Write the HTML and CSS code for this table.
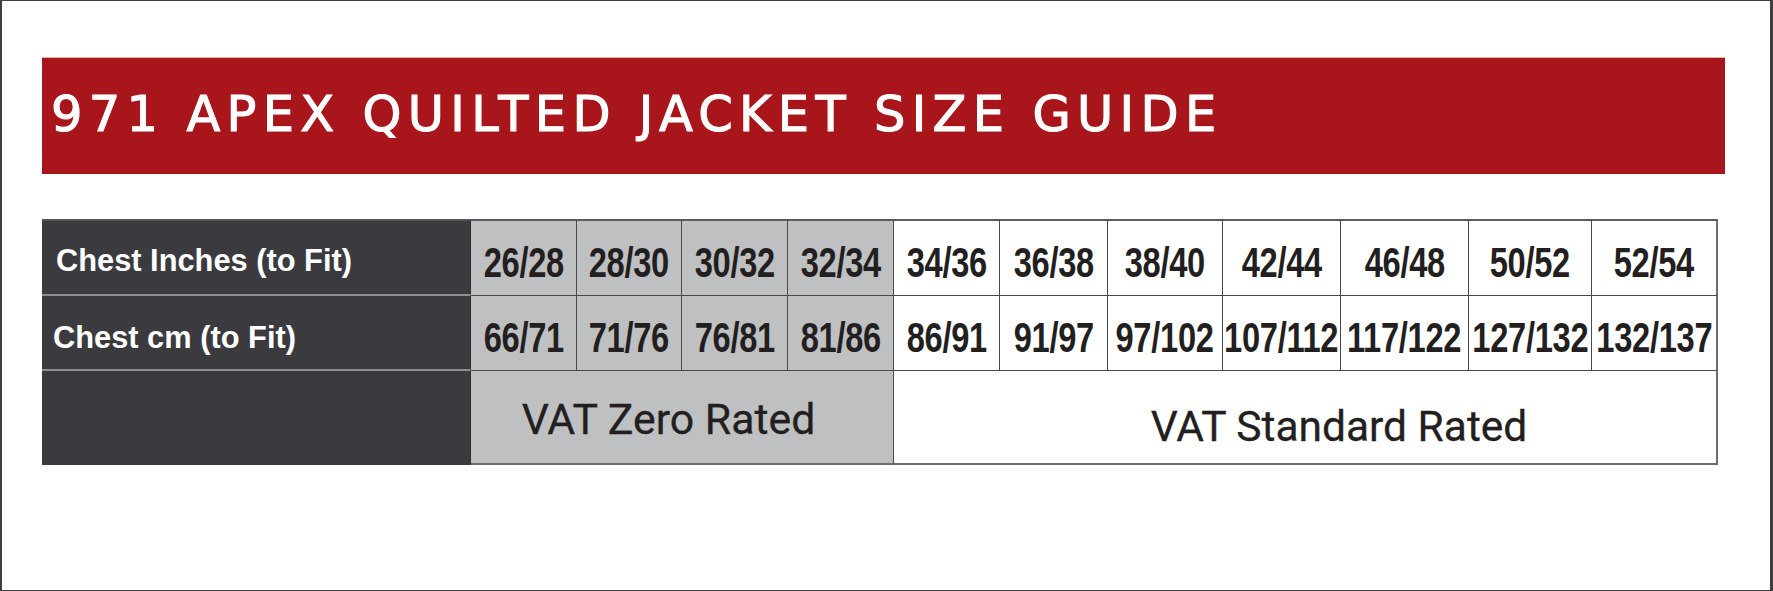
FILE: index.html
```html
<!DOCTYPE html>
<html lang="en">
<head>
<meta charset="utf-8">
<title>971 Apex Quilted Jacket Size Guide</title>
<link rel="stylesheet" href="styles.css">
</head>
<body>
<div class="frame">
  <div class="banner"><h1 class="title">971 APEX QUILTED JACKET SIZE GUIDE</h1></div>
  <div class="table">
    <div class="cell label r1">Chest Inches (to Fit)</div>
    <div class="cell num grey r1"><span>26/28</span></div>
    <div class="cell num grey r1"><span>28/30</span></div>
    <div class="cell num grey r1"><span>30/32</span></div>
    <div class="cell num grey r1"><span>32/34</span></div>
    <div class="cell num r1"><span>34/36</span></div>
    <div class="cell num r1"><span>36/38</span></div>
    <div class="cell num r1"><span>38/40</span></div>
    <div class="cell num r1"><span>42/44</span></div>
    <div class="cell num r1"><span>46/48</span></div>
    <div class="cell num r1"><span>50/52</span></div>
    <div class="cell num r1 last"><span>52/54</span></div>

    <div class="cell label r2">Chest cm (to Fit)</div>
    <div class="cell num grey"><span>66/71</span></div>
    <div class="cell num grey"><span>71/76</span></div>
    <div class="cell num grey"><span>76/81</span></div>
    <div class="cell num grey"><span>81/86</span></div>
    <div class="cell num"><span>86/91</span></div>
    <div class="cell num"><span>91/97</span></div>
    <div class="cell num"><span>97/102</span></div>
    <div class="cell num"><span>107/112</span></div>
    <div class="cell num"><span>117/122</span></div>
    <div class="cell num"><span>127/132</span></div>
    <div class="cell num last"><span>132/137</span></div>

    <div class="cell label r3"></div>
    <div class="cell vat grey zero">VAT Zero Rated</div>
    <div class="cell vat standard last">VAT Standard Rated</div>
  </div>
</div>
</body>
</html>
```
FILE: styles.css
```css
html, body {
  margin: 0;
  padding: 0;
  background: #ffffff;
}

.frame {
  box-sizing: border-box;
  width: 1773px;
  height: 591px;
  border-style: solid;
  border-color: #3f3f3f;
  border-width: 1px 3px 1px 2px;
  padding: 56px 0 0 40px;
  background: #ffffff;
}

.banner {
  box-sizing: border-box;
  width: 1683px;
  height: 117px;
  background: #a8161c;
  border-top: 1px solid #d9b9a8;
  padding: 27px 0 0 9px;
}

.title {
  margin: 0;
  font-family: "DejaVu Sans", sans-serif;
  font-weight: normal;
  font-size: 49.5px;
  line-height: normal;
  letter-spacing: 6.3px;
  color: #ffffff;
  -webkit-text-stroke: 1.1px #ffffff;
  white-space: nowrap;
}

.table {
  margin-top: 45px;
  width: 1676px;
  display: grid;
  grid-template-columns: 429px 106px 105px 106px 106px 106px 108px 115px 118px 128px 123px 126px;
  grid-template-rows: 77px 75px 94px;
}

.cell {
  box-sizing: border-box;
  display: flex;
  align-items: center;
  justify-content: center;
  background: #ffffff;
  border-right: 1px solid #4a4a4a;
  border-bottom: 1px solid #4a4a4a;
  color: #231f20;
}

.cell.r1 {
  border-top: 2px solid #5c5c5c;
}

.cell.last {
  border-right: 2px solid #6e6e6e;
}

.cell.grey {
  background: #bfc0c2;
}

.label {
  justify-content: flex-start;
  background: #3b3a3f;
  color: #ffffff;
  border-right: 1px solid #2e2d31;
  border-bottom: 2px solid #8e8d92;
  font-family: "Liberation Sans", Arial, sans-serif;
  font-weight: bold;
  font-size: 30.8px;
  white-space: nowrap;
}

.label.r1 {
  border-top: 2px solid #55545a;
  padding: 6px 0 0 14px;
}

.label.r2 {
  padding: 10px 0 0 11px;
}

.label.r3 {
  border-bottom: 2px solid #3b3a3f;
}

.num {
  font-family: "Liberation Sans", Arial, sans-serif;
  font-weight: bold;
  font-size: 43px;
  letter-spacing: -0.4px;
  padding-top: 9px;
  white-space: nowrap;
}

.num span {
  display: inline-block;
  transform: scaleX(0.76);
}

.vat {
  font-family: Roboto, "DejaVu Sans", sans-serif;
  font-weight: 400;
  white-space: nowrap;
  border-bottom: 2px solid #6e6e6e;
  -webkit-text-stroke: 0.3px #231f20;
}

.vat.zero {
  grid-column: span 4;
  font-size: 42.8px;
  padding: 3px 27px 0 0;
}

.vat.standard {
  grid-column: span 7;
  font-size: 42.5px;
  padding: 18px 0 0 68px;
}
```
